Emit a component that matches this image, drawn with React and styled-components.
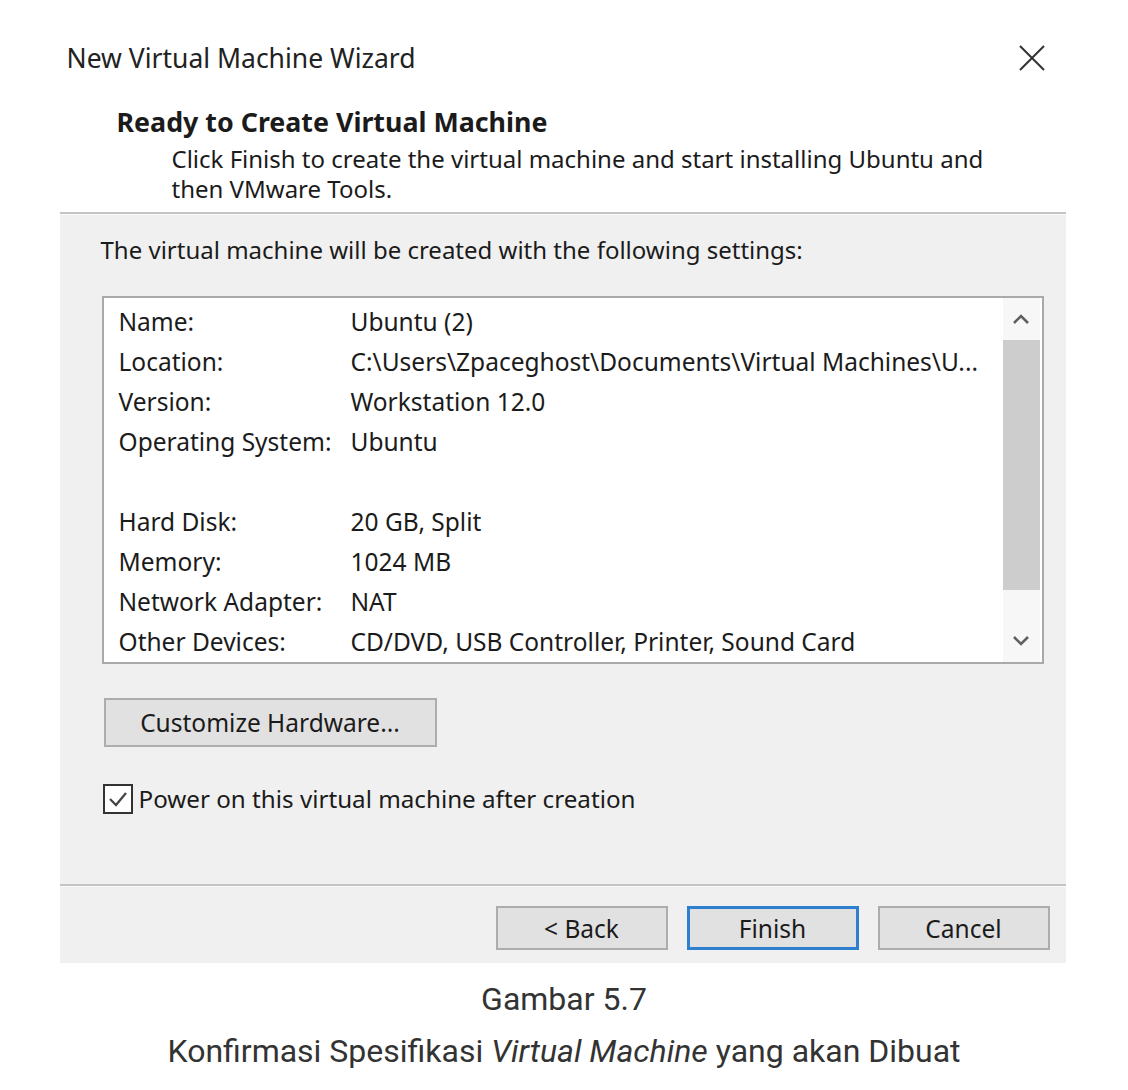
import React from "react";
import styled, { createGlobalStyle } from "styled-components";

const Global = createGlobalStyle`
  html, body { margin: 0; padding: 0; background: #ffffff; }
  body { font-family: "Liberation Sans", Arial, sans-serif; }
`;

const Page = styled.div`
  width: 1128px;
  display: flex;
  flex-direction: column;
  align-items: center;
`;

const Dialog = styled.div`
  width: 1006px;
  margin-left: -3px;
  display: flex;
  flex-direction: column;
  font-family: "Noto Sans", "Open Sans", sans-serif;
  color: #1b1b1b;
`;

const TitleBar = styled.div`
  height: 100px;
  display: flex;
  align-items: center;
  justify-content: space-between;
  padding: 16px 19px 0 7px;
  box-sizing: border-box;
`;

const Title = styled.div`
  font-size: 26.5px;
  color: #222;
`;

const CloseBtn = styled.div`
  width: 30px;
  height: 30px;
  display: flex;
  align-items: center;
  justify-content: center;
`;

const Header = styled.div`
  padding: 6px 0 0 57px;
  height: 112px;
  box-sizing: border-box;
  display: flex;
  flex-direction: column;
`;

const Heading = styled.div`
  font-size: 26.8px;
  font-weight: bold;
  line-height: 32px;
`;

const Description = styled.div`
  margin-left: 55px;
  margin-top: 6px;
  font-size: 24px;
  line-height: 30px;
  white-space: nowrap;
`;

const Separator = styled.div`
  height: 2px;
  background: #c4c4c4;
  border-bottom: 1px solid #fbfbfb;
`;

const Panel = styled.div`
  background: #f0f0f0;
  height: 669px;
  box-sizing: border-box;
  padding: 20px 0 0 41px;
  display: flex;
  flex-direction: column;
`;

const Intro = styled.div`
  font-size: 24px;
  line-height: 30px;
`;

const ListBox = styled.div`
  margin-top: 31px;
  margin-left: 1px;
  width: 942px;
  height: 368px;
  box-sizing: border-box;
  border: 2px solid #a9a9a9;
  background: #ffffff;
  display: flex;
`;

const Rows = styled.div`
  flex: 1;
  padding: 3px 0 0 15px;
`;

const Row = styled.div`
  display: grid;
  grid-template-columns: 232px 1fr;
  height: 40px;
  align-items: center;
  font-size: 24.5px;
  white-space: nowrap;
`;

const Scrollbar = styled.div`
  width: 37px;
  margin-right: 2px;
  background: #f7f7f7;
  display: flex;
  flex-direction: column;
  align-items: stretch;
`;

const ScrollArrow = styled.div`
  height: 42px;
  display: flex;
  align-items: center;
  justify-content: center;
`;

const Track = styled.div`
  flex: 1;
  display: flex;
  flex-direction: column;
`;

const Thumb = styled.div`
  height: 250px;
  background: #cdcdcd;
`;

const WinButton = styled.button`
  font-family: "Noto Sans", "Open Sans", sans-serif;
  font-size: 24.5px;
  color: #1b1b1b;
  background: #e1e1e1;
  border: ${(p) => (p.$primary ? "3px solid #2f7fd0" : "2px solid #adadad")};
  width: ${(p) => p.$w}px;
  height: ${(p) => p.$h}px;
  box-sizing: border-box;
  padding: 0;
  display: flex;
  align-items: center;
  justify-content: center;
`;

const CustomizeWrap = styled.div`
  margin-top: 34px;
  margin-left: 3px;
`;

const CheckRow = styled.label`
  margin-top: 35px;
  margin-left: 2px;
  display: flex;
  align-items: center;
  gap: 6px;
  font-size: 24.2px;
`;

const CheckBox = styled.span`
  width: 30px;
  height: 30px;
  box-sizing: border-box;
  border: 2px solid #333;
  background: #fff;
  display: flex;
  align-items: center;
  justify-content: center;
`;

const Footer = styled.div`
  background: #f0f0f0;
  height: 76px;
  box-sizing: border-box;
  display: flex;
  justify-content: flex-end;
  padding: 19px 16px 0 0;
  gap: 19px;
`;

const Caption = styled.div`
  font-family: Roboto, "Liberation Sans", Arial, sans-serif;
  color: #333;
  font-size: 32px;
  text-align: center;
  line-height: 42px;
  margin-top: ${(p) => p.$mt}px;
  width: 100%;
`;

const Chevron = ({ up }) => (
  <svg width="18" height="12" viewBox="0 0 18 12">
    <path
      d={up ? "M2 10 L9 3 L16 10" : "M2 2 L9 9 L16 2"}
      fill="none"
      stroke="#606060"
      strokeWidth="2.6"
    />
  </svg>
);

const rows = [
  ["Name:", "Ubuntu (2)"],
  ["Location:", "C:\\Users\\Zpaceghost\\Documents\\Virtual Machines\\U..."],
  ["Version:", "Workstation 12.0"],
  ["Operating System:", "Ubuntu"],
  ["", ""],
  ["Hard Disk:", "20 GB, Split"],
  ["Memory:", "1024 MB"],
  ["Network Adapter:", "NAT"],
  ["Other Devices:", "CD/DVD, USB Controller, Printer, Sound Card"],
];

export default function App() {
  return (
    <Page>
      <Global />
      <Dialog>
        <TitleBar>
          <Title>New Virtual Machine Wizard</Title>
          <CloseBtn>
            <svg width="26" height="26" viewBox="0 0 26 26">
              <path d="M1 1 L25 25 M25 1 L1 25" stroke="#333" strokeWidth="2" />
            </svg>
          </CloseBtn>
        </TitleBar>
        <Header>
          <Heading>Ready to Create Virtual Machine</Heading>
          <Description>
            Click Finish to create the virtual machine and start installing Ubuntu and
            <br />
            then VMware Tools.
          </Description>
        </Header>
        <Separator />
        <Panel>
          <Intro>The virtual machine will be created with the following settings:</Intro>
          <ListBox>
            <Rows>
              {rows.map(([k, v], i) => (
                <Row key={i}>
                  <span>{k}</span>
                  <span>{v}</span>
                </Row>
              ))}
            </Rows>
            <Scrollbar>
              <ScrollArrow>
                <Chevron up />
              </ScrollArrow>
              <Track>
                <Thumb />
              </Track>
              <ScrollArrow>
                <Chevron />
              </ScrollArrow>
            </Scrollbar>
          </ListBox>
          <CustomizeWrap>
            <WinButton $w={333} $h={49}>Customize Hardware...</WinButton>
          </CustomizeWrap>
          <CheckRow>
            <CheckBox>
              <svg width="22" height="22" viewBox="0 0 22 22">
                <path d="M3 11 L9 17 L19 5" fill="none" stroke="#444" strokeWidth="2.2" />
              </svg>
            </CheckBox>
            Power on this virtual machine after creation
          </CheckRow>
        </Panel>
        <Separator />
        <Footer>
          <WinButton $w={172} $h={44}>&lt; Back</WinButton>
          <WinButton $w={172} $h={44} $primary>Finish</WinButton>
          <WinButton $w={172} $h={44}>Cancel</WinButton>
        </Footer>
      </Dialog>
      <Caption $mt={15}>Gambar 5.7</Caption>
      <Caption $mt={10}>
        Konfirmasi Spesifikasi <i>Virtual Machine</i> yang akan Dibuat
      </Caption>
    </Page>
  );
}
